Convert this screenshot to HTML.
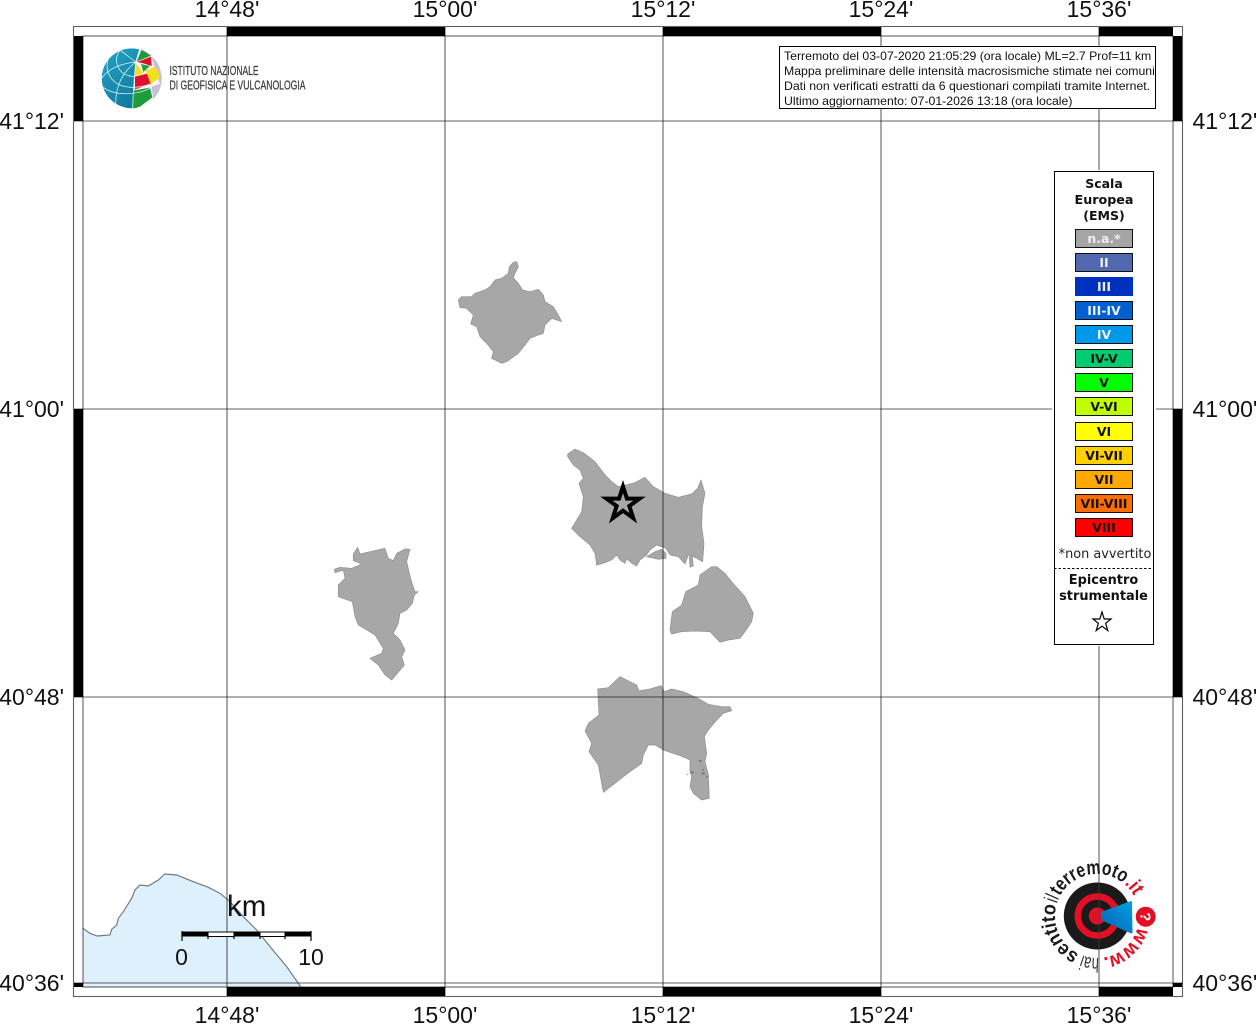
<!DOCTYPE html>
<html><head><meta charset="utf-8"><title>Mappa</title>
<style>
html,body{margin:0;padding:0;background:#fff;width:1256px;height:1024px;overflow:hidden}
svg{position:absolute;left:0;top:0;display:block}
.ax{font-family:"Liberation Sans",sans-serif;font-size:23px;fill:#111}
.lg{font-family:"DejaVu Sans",sans-serif;font-size:12.5px;font-weight:bold;text-anchor:middle;fill:#111}
.sw{stroke:#111;stroke-width:1}
.info{font-family:"Liberation Sans",sans-serif;font-size:12.27px;fill:#111}
.isl{fill:#a7a7a7;stroke:#8f8f8f;stroke-width:2;stroke-linejoin:round}
.ring{font-family:"Liberation Sans",sans-serif;font-size:20px;font-weight:bold;fill:#1a1a1a}
</style></head>
<body>
<svg width="1256" height="1024" viewBox="0 0 1256 1024" xmlns="http://www.w3.org/2000/svg">
<defs>
<linearGradient id="gb" x1="0" y1="0" x2=".8" y2="1"><stop offset="0" stop-color="#22a4c6"/><stop offset="1" stop-color="#0e7196"/></linearGradient>
<linearGradient id="cone" x1="0" y1="1" x2="1" y2="0"><stop offset="0" stop-color="#0a62b0"/><stop offset="1" stop-color="#00a0e6"/></linearGradient>
<clipPath id="gc"><circle cx="110" cy="115" r="90"/></clipPath>
<path id="rp" d="M1138.4 923.3A42 42 0 1 1 1055.6 908.7A42 42 0 1 1 1138.4 923.3"/>
</defs>

<!-- coast -->
<g transform="translate(60,860) scale(.33333)">
<path d="M69 205L90 220L112 228L150 225L155 208L170 195L175 175L190 155L215 115L225 90L240 75L265 78L295 60L315 42L350 45L400 65L445 82L480 100L510 125L550 170L590 210L630 260L680 320L722 380L69 380Z" fill="#dff0fd"/>
<path d="M69 205L90 220L112 228L150 225L155 208L170 195L175 175L190 155L215 115L225 90L240 75L265 78L295 60L315 42L350 45L400 65L445 82L480 100L510 125L550 170L590 210L630 260L680 320L722 380" fill="none" stroke="#6f7a80" stroke-width="3.5"/>
</g>

<!-- municipalities -->
<g transform="translate(450,255) scale(.33333)">
<path class="isl" d="M25 135L35 125L65 125L75 115L105 105L120 95L135 75L155 70L175 55L178 35L190 22L200 20L205 35L195 55L190 68L205 85L218 105L240 110L265 103L280 120L285 140L310 155L325 180L335 200L305 190L285 210L280 235L265 240L240 250L225 270L205 295L170 320L155 325L125 310L130 290L110 265L90 245L80 215L62 207L70 180L50 160L30 158Z"/>
</g>
<g transform="translate(555,440) scale(.33333)">
<path class="isl" d="M38 42L60 27L85 38L120 65L150 105L170 125L190 140L240 128L270 112L295 140L330 160L370 172L410 162L428 145L438 120L450 160L442 200L440 260L447 310L443 365L425 355L415 350L400 345L390 372L370 350L345 345L333 325L305 315L285 330L275 345L255 360L245 378L228 368L215 355L210 370L195 360L185 345L170 360L150 368L125 375L120 340L105 315L75 290L50 265L65 240L80 215L85 170L72 130L85 115L75 90L55 75L38 50Z"/>
<path class="isl" d="M275 350L300 335L320 328L333 340L333 355L310 358Z"/>
<path class="isl" d="M403 350L412 350L415 378L405 382Z"/>
<path class="isl" d="M435 405L470 380L485 380L510 400L530 425L570 470L595 520L590 545L570 575L555 595L520 600L495 607L465 575L420 573L380 575L350 582L345 570L352 515L380 495L392 455L430 435Z"/>
</g>
<g transform="translate(575,665) scale(.33333)">
<path class="isl" d="M68 72L100 68L135 35L185 60L192 78L225 72L258 62L268 80L290 72L325 80L365 98L400 118L440 125L465 125L470 137L445 145L425 165L400 195L388 215L395 265L390 290L400 330L403 400L380 405L355 385L345 365L350 335L345 320L345 285L310 270L265 255L240 240L220 240L205 270L200 295L165 320L85 382L70 300L42 260L50 235L30 198L40 175L72 150Z"/>
<path d="M372 285h7v6h-7zM346 320h10v5h-10zM380 322h9v6h-9zM382 312h5v5h-5zM393 332h5v6h-5zM332 330l8-3v3z" fill="#777"/>
</g>
<g transform="translate(325,540) scale(.33333)">
<path class="isl" d="M85 42L98 22L105 42L135 35L180 25L190 55L205 62L215 40L240 27L255 28L245 65L258 120L270 155L280 155L268 165L262 190L245 210L225 220L220 250L205 280L225 300L240 330L230 350L238 375L200 420L180 405L160 375L135 355L170 340L175 325L150 285L100 255L90 230L82 185L40 170L40 135L60 115L55 90L30 98L28 88L45 82L80 85L110 72L85 62Z"/>
</g>

<!-- star -->
<path d="M623 486.5L626.9 498.6L639.6 498.6L629.35 506.06L633.3 518.2L623 510.68L612.7 518.2L616.65 506.06L606.4 498.6L619.07 498.6Z" fill="none" stroke="#000" stroke-width="4" stroke-miterlimit="8"/>

<!-- frame checker -->
<g fill="#000">
<rect x="227" y="27" width="218" height="9"/><rect x="663" y="27" width="218" height="9"/><rect x="1099" y="27" width="74" height="9"/>
<rect x="227" y="987" width="218" height="9"/><rect x="663" y="987" width="218" height="9"/><rect x="1099" y="987" width="74" height="9"/>
<rect x="74" y="36" width="9" height="85"/><rect x="74" y="409" width="9" height="288"/><rect x="74" y="983" width="9" height="4"/>
<rect x="1173" y="36" width="9" height="85"/><rect x="1173" y="409" width="9" height="288"/><rect x="1173" y="983" width="9" height="4"/>
</g>
<!-- grid -->
<g stroke="#000" stroke-opacity=".62" stroke-width="1.1" fill="none">
<path d="M227 27V996M445 27V996M663 27V996M881 27V996M1099 27V996"/>
<path d="M74 121H1183M74 409H1183M74 697H1183M74 983H1183"/>
<rect x="73.5" y="26.5" width="1109" height="970"/>
<rect x="83" y="36" width="1090" height="951"/>
</g>

<!-- axis labels -->
<g class="ax" text-anchor="middle">
<text x="227" y="17">14°48'</text><text x="445" y="17">15°00'</text><text x="663" y="17">15°12'</text><text x="881" y="17">15°24'</text><text x="1099" y="17">15°36'</text>
<text x="227" y="1023">14°48'</text><text x="445" y="1023">15°00'</text><text x="663" y="1023">15°12'</text><text x="881" y="1023">15°24'</text><text x="1099" y="1023">15°36'</text>
</g>
<g class="ax" text-anchor="end">
<text x="64" y="129">41°12'</text><text x="64" y="417">41°00'</text><text x="64" y="705">40°48'</text><text x="64" y="991">40°36'</text>
</g>
<g class="ax">
<text x="1192.5" y="129">41°12'</text><text x="1192.5" y="417">41°00'</text><text x="1192.5" y="705">40°48'</text><text x="1192.5" y="991">40°36'</text>
</g>

<!-- INGV logo -->
<g transform="translate(95,40) scale(.33333)">
<g clip-path="url(#gc)">
<circle cx="110" cy="115" r="90" fill="url(#gb)"/>
<path d="M122 66L135 20L215 60L215 200L112 210Z" fill="#f6f4f8"/>
<path d="M125 65L140 28L168 47Z" fill="#1f9a3c"/>
<path d="M127 66L168 50L170 78L145 70Z" fill="#e0102c"/>
<path d="M170 47L190 70L203 115L197 138L178 80Z" fill="#c9bfd2"/>
<path d="M120 68L135 85L145 100L120 108Z" fill="#f2e21a"/>
<path d="M138 72L165 78L150 92L145 96Z" fill="#2aa03c"/>
<path d="M120 110L160 100L168 132L120 148Z" fill="#e0102c"/>
<path d="M152 92L180 80L196 112L167 132Z" fill="#f2e21a"/>
<path d="M114 152L165 143L172 172L135 200L110 208Z" fill="#1f9a3c"/>
<path d="M170 140L200 130L192 168L175 178Z" fill="#c9bfd2"/>
<path d="M122 66L70 26M122 66C80 70 40 85 20 115M122 66C85 95 60 135 62 200M122 66C118 110 114 160 113 208M122 66L134 28M44 46C28 80 38 110 62 128C88 146 130 146 165 132M78 28C58 48 62 78 80 96C98 112 125 110 120 108M22 140C60 170 125 165 165 145" fill="none" stroke="#e6f4f8" stroke-width="2.2"/>
</g>
</g>
<g font-family="'Liberation Sans Narrow','Liberation Sans',sans-serif" font-size="12.5" fill="#3c3c3c" stroke="#3c3c3c" stroke-width=".25">
<text x="169.5" y="75" textLength="89" lengthAdjust="spacingAndGlyphs">ISTITUTO NAZIONALE</text>
<text x="169.5" y="89.5" textLength="136" lengthAdjust="spacingAndGlyphs">DI GEOFISICA E VULCANOLOGIA</text>
</g>

<!-- info box -->
<rect x="779.5" y="46.5" width="376" height="62" fill="#fff" stroke="#000" stroke-width="1"/>
<g class="info">
<text x="784" y="60">Terremoto del 03-07-2020 21:05:29 (ora locale) ML=2.7 Prof=11 km</text>
<text x="784" y="75">Mappa preliminare delle intensità macrosismiche stimate nei comuni</text>
<text x="784" y="90">Dati non verificati estratti da 6 questionari compilati tramite Internet.</text>
<text x="784" y="105">Ultimo aggiornamento: 07-01-2026 13:18 (ora locale)</text>
</g>

<!-- legend -->
<rect x="1052" y="170" width="104" height="476" fill="#fff"/>
<rect x="1054.5" y="171.5" width="99" height="473" fill="#fff" stroke="#000" stroke-width="1"/>
<text class="lg" x="1104" y="188">Scala</text>
<text class="lg" x="1104" y="204" style="font-size:12.7px">Europea</text>
<text class="lg" x="1104" y="220">(EMS)</text>
<g class="sw">
<rect x="1075.5" y="229.5" width="57" height="18" fill="#a5a5a5"/>
<rect x="1075.5" y="253.5" width="57" height="18" fill="#5068b0"/>
<rect x="1075.5" y="277.5" width="57" height="18" fill="#0030c0" stroke="#0030c0"/>
<rect x="1075.5" y="301.5" width="57" height="18" fill="#0060d0"/>
<rect x="1075.5" y="325.5" width="57" height="18" fill="#0098e8"/>
<rect x="1075.5" y="349.5" width="57" height="18" fill="#00cc70"/>
<rect x="1075.5" y="373.5" width="57" height="18" fill="#00ff00"/>
<rect x="1075.5" y="397.5" width="57" height="18" fill="#c0ff00"/>
<rect x="1075.5" y="422.5" width="57" height="18" fill="#ffff00"/>
<rect x="1075.5" y="446.5" width="57" height="18" fill="#ffd000"/>
<rect x="1075.5" y="470.5" width="57" height="18" fill="#ffa800"/>
<rect x="1075.5" y="494.5" width="57" height="18" fill="#ff6c00"/>
<rect x="1075.5" y="518.5" width="57" height="18" fill="#ff0000"/>
</g>
<g class="lg">
<text x="1104" y="243" style="fill:#eee">n.a.*</text>
<text x="1104" y="267" style="fill:#eee">II</text>
<text x="1104" y="291" style="fill:#eee">III</text>
<text x="1104" y="315" style="fill:#eee">III-IV</text>
<text x="1104" y="339" style="fill:#eee">IV</text>
<text x="1104" y="363">IV-V</text>
<text x="1104" y="387">V</text>
<text x="1104" y="411">V-VI</text>
<text x="1104" y="436">VI</text>
<text x="1104" y="460">VI-VII</text>
<text x="1104" y="484">VII</text>
<text x="1104" y="508">VII-VIII</text>
<text x="1104" y="532">VIII</text>
</g>
<text x="1105" y="558" font-family="'DejaVu Sans',sans-serif" font-size="12.9" text-anchor="middle" fill="#222">*non avvertito</text>
<path d="M1054 568.5H1153" stroke="#000" stroke-width="1" stroke-dasharray="2.5 2"/>
<text class="lg" x="1103.5" y="584" style="font-size:12.9px">Epicentro</text>
<text class="lg" x="1103.5" y="600" style="font-size:12.9px">strumentale</text>
<path d="M1102 612L1104.2 619H1111L1105.6 623.3L1107.8 630.5L1102 626.2L1096.2 630.5L1098.4 623.3L1093 619H1099.8Z" fill="#fff" stroke="#000" stroke-width="1.2"/>

<!-- scale bar -->
<text x="227" y="916" font-family="'Liberation Sans',sans-serif" font-size="29.5" fill="#111">km</text>
<rect x="182" y="931.5" width="26" height="5" fill="#000"/>
<rect x="208" y="932" width="26" height="4.5" fill="#fff" stroke="#000"/>
<rect x="234" y="931.5" width="26" height="5" fill="#000"/>
<rect x="260" y="932" width="25" height="4.5" fill="#fff" stroke="#000"/>
<rect x="285" y="931.5" width="26" height="5" fill="#000"/>
<path d="M182 931V941M311 931V941M208 936V939M234 936V939M260 936V939M285 936V939" stroke="#000" stroke-width="1.2"/>
<text class="ax" x="181.5" y="965" text-anchor="middle">0</text>
<text class="ax" x="311" y="965" text-anchor="middle">10</text>

<!-- hai sentito logo -->
<circle cx="1097.3" cy="916" r="33.5" fill="#1a1a1a"/>
<circle cx="1097.3" cy="916" r="19.5" fill="none" stroke="#e30f24" stroke-width="6.5"/>
<circle cx="1097.3" cy="916" r="8.5" fill="#e30f24"/>
<path d="M1101 912L1131 901Q1132 901 1132 903L1132.5 932Q1132.5 934 1130 933L1101 920Z" fill="url(#cone)"/>
<circle cx="1145.7" cy="916.7" r="10" fill="#e30f24"/>
<text x="1145.7" y="922" font-family="'Liberation Sans',sans-serif" font-size="15" font-weight="bold" fill="#fff" text-anchor="middle" transform="rotate(90 1145.7 916.7)">?</text>
<path d="M1099 883V949" stroke="#444" stroke-opacity=".7" stroke-width="1"/>
<text class="ring" style="fill:#e30f24"><textPath href="#rp" startOffset="3.7" textLength="49" lengthAdjust="spacingAndGlyphs">www.</textPath></text>
<text class="ring" style="font-weight:normal;fill:#333"><textPath href="#rp" startOffset="56.5" textLength="17" lengthAdjust="spacingAndGlyphs">hai</textPath></text>
<text class="ring"><textPath href="#rp" startOffset="77" textLength="58.6" lengthAdjust="spacingAndGlyphs">sentito</textPath></text>
<text class="ring" style="font-weight:normal;fill:#333"><textPath href="#rp" startOffset="137" textLength="6.6" lengthAdjust="spacingAndGlyphs">il</textPath></text>
<text class="ring"><textPath href="#rp" startOffset="145" textLength="74" lengthAdjust="spacingAndGlyphs">terremoto</textPath></text>
<text class="ring" style="fill:#e30f24"><textPath href="#rp" startOffset="220" textLength="15.4" lengthAdjust="spacingAndGlyphs">.it</textPath></text>
</svg>
</body></html>
